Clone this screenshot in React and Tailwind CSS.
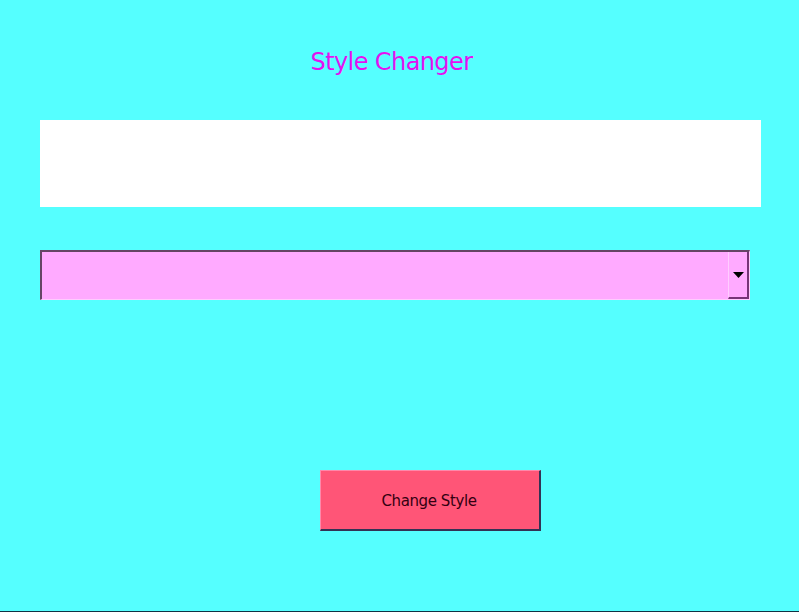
import React from 'react';

const App = () => {
    return (
        <div className="h-[612px] w-[799px] bg-[#55ffff] border-b border-[#113344] flex flex-col font-['DejaVu_Sans',sans-serif]">
            <h1 className="mt-[45px] h-[34px] text-center text-[24px] leading-[34px] text-[#e411f0] tracking-[-0.6px] pr-[16px]">
                Style Changer
            </h1>
            <div className="mt-[41px] ml-[40px] w-[721px] h-[87px] bg-white" />
            <div className="mt-[43px] ml-[40px] w-[710px] h-[50px] bg-[#ffaaff] border-l-2 border-t-2 border-[#664466] border-b-[#ffccff] border-r-[#ffccff] border-b border-r flex justify-end">
                <div className="w-[21px] h-full border-l border-[#ffccff] border-r-2 border-b-2 border-r-[#773377] border-b-[#773377] flex items-center justify-center">
                    <svg width="11" height="6" viewBox="0 0 11 6">
                        <path d="M0 0 H11 L5.5 6 Z" fill="#000" />
                    </svg>
                </div>
            </div>
            <div className="mt-[170px] ml-[320px] flex">
                <button className="w-[221px] h-[61px] bg-[#ff5577] border-t border-l border-[#ff88aa] border-r-2 border-b-2 border-r-[#333355] border-b-[#333355] text-[15px] tracking-[-0.4px] text-[#330011] pt-[3px] pr-[2px]">
                    Change Style
                </button>
            </div>
        </div>
    );
};

export default App;
